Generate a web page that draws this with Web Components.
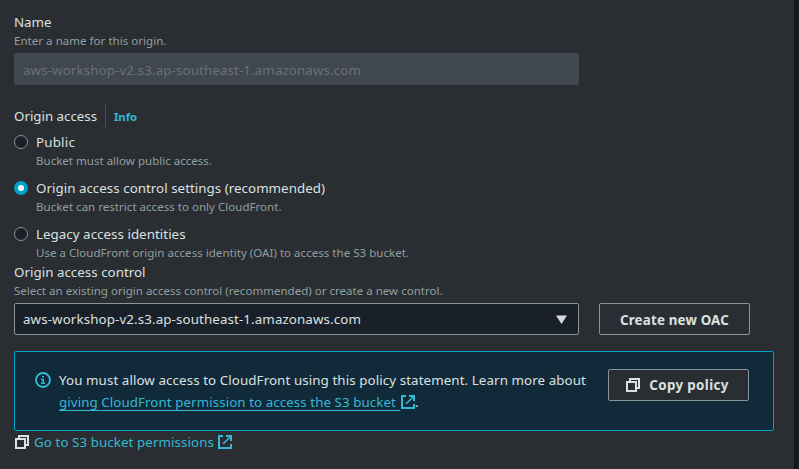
<!DOCTYPE html>
<html lang="en">
<head>
<meta charset="utf-8">
<title>Origin settings</title>
<style>
html,body{margin:0;background:#2a2e33;height:100%;overflow:hidden}
body{font-family:"Noto Sans",sans-serif;font-size:13.33px;line-height:22px;color:#dbe0e0}
</style>
</head>
<body>
<origin-page></origin-page>
<script>
const define = (name, html, setup) => customElements.define(name, class extends HTMLElement {
  constructor() {
    super();
    const t = document.createElement('template');
    t.innerHTML = html;
    this.attachShadow({mode: 'open'}).append(t.content.cloneNode(true));
  }
  connectedCallback() { if (setup) setup(this, this.shadowRoot); }
});

/* One line of text whose tracking is set so that it spans the width in "w". */
define('ui-text', `<style>:host{display:inline-block;white-space:pre;vertical-align:top}</style><slot></slot>`, el => {
  const w = +el.getAttribute('w');
  const n = el.textContent.length;
  const natural = el.getBoundingClientRect().width;
  el.style.letterSpacing = ((w - natural) / n).toFixed(4) + 'px';
});

define('icon-copy', `<style>:host{display:block;width:14px;height:14px}svg{display:block}</style>
<svg width="14" height="14" viewBox="0 0 14 14" fill="none" stroke="currentColor" stroke-width="2"><path d="M1 4h9v9H1zM4 4V1h9v9h-3"/></svg>`);

define('icon-external', `<style>:host{display:block;width:14px;height:14px;color:#33b9d4}svg{display:block}</style>
<svg width="14" height="14" viewBox="0 0 14 14" fill="none" stroke="currentColor" stroke-width="2"><path d="M5 1H1v12h12V9M8 1h5v5"/><path d="M12.5 1.5L5.2 8.8" stroke-width="1.6"/></svg>`);

define('icon-info', `<style>:host{display:block;width:16px;height:16px;color:#33b9d4}svg{display:block}</style>
<svg width="16" height="16" viewBox="0 0 16 16" fill="none" stroke="currentColor"><circle cx="8" cy="8" r="7" stroke-width="1.9"/><path d="M7 4.7h2M6 7.5h3M8.2 7v4M6 11.3h4" stroke-width="1.5"/></svg>`);

define('form-field', `<style>
:host{display:block}
.label{height:22px}
.desc{height:16px;line-height:16px;font-size:11.5px;color:#919f9f;margin-bottom:4px}
</style><div class="label"><slot name="label"></slot></div><div class="desc"><slot name="desc"></slot></div><slot></slot>`);

define('text-box', `<style>
:host{display:flex;align-items:center;box-sizing:border-box;width:565px;height:32px;padding:2px 9px 0;border-radius:2px;background:#414750;color:#687078}
</style><slot></slot>`);

define('select-box', `<style>
:host{display:flex;align-items:center;justify-content:space-between;box-sizing:border-box;width:565px;height:32px;padding:0 11px 0 8px;border:1px solid #879596;border-radius:2px;background:#1a2029}
svg{display:block}
</style><slot></slot><svg width="11" height="9" viewBox="0 0 11 9"><path d="M0 .5h11L5.5 9z" fill="#d5dbdb"/></svg>`);

define('radio-option', `<style>
:host{display:grid;grid-template-columns:14px 1fr;column-gap:8px;height:38px}
.dot{box-sizing:border-box;width:14px;height:14px;margin-top:4px;border:1px solid #879596;border-radius:50%;background:#1a2029}
:host([checked]) .dot{border:4px solid #00a1c9;background:#fff}
.desc{height:16px;line-height:16px;font-size:11.5px;color:#919f9f}
</style><div class="dot"></div><div><slot></slot></div><i></i><div class="desc"><slot name="desc"></slot></div>`);

define('ui-button', `<style>
:host{display:flex;align-items:center;justify-content:center;gap:9px;box-sizing:border-box;height:32px;border:1px solid #879596;border-radius:2px;background:#2a2e33;font-weight:700}
</style><slot></slot>`);

define('info-alert', `<style>
:host{display:flex;box-sizing:border-box;width:760px;height:80px;padding:17px 24px 0 20px;border:1px solid #00a1c9;border-radius:2px;background:#112a3a}
icon-info{margin:3px 8px 0 0}
.body{flex:1}
</style><icon-info></icon-info><div class="body"><slot></slot></div><slot name="action"></slot>`);

define('origin-page', `<style>
:host{display:grid;grid-template-columns:794px 5px;height:469px}
main{padding:11px 0 0 14px}
aside{background:#16191f;border-left:1px solid #101216}
.head{display:flex;height:22px;margin:20px 0 4px}
.info{margin-left:8px;padding-left:8px;border-left:1px solid #4a5056;color:#33b9d4;font-weight:700;font-size:11.3px;line-height:24px}
.radios{display:grid;row-gap:8px}
.row{display:flex;gap:20px;margin-bottom:16px}
.row ui-button{width:151px;padding-top:1px}
info-alert ui-button{width:141px;padding-right:2px}
.line{display:flex;height:22px}
.link{color:#33b9d4}
.under{height:19px;border-bottom:1px solid #33b9d4;padding-right:4px}
.line icon-external{margin:4px 0 0 1px}
.go icon-copy{margin:4px 5px 0 1px}
.go icon-external{margin-left:4px}
</style>
<main>
<form-field><ui-text slot="label" w="37.5">Name</ui-text><ui-text slot="desc" w="152.5">Enter a name for this origin.</ui-text>
<text-box><ui-text w="338">aws-workshop-v2.s3.ap-southeast-1.amazonaws.com</ui-text></text-box></form-field>
<div class="head"><ui-text w="83">Origin access</ui-text><div class="info"><ui-text w="23">Info</ui-text></div></div>
<div class="radios">
<radio-option><ui-text w="39">Public</ui-text><ui-text slot="desc" w="176">Bucket must allow public access.</ui-text></radio-option>
<radio-option checked><ui-text w="289">Origin access control settings (recommended)</ui-text><ui-text slot="desc" w="245.5">Bucket can restrict access to only CloudFront.</ui-text></radio-option>
<radio-option><ui-text w="149.6">Legacy access identities</ui-text><ui-text slot="desc" w="373">Use a CloudFront origin access identity (OAI) to access the S3 bucket.</ui-text></radio-option>
</div>
<form-field><ui-text slot="label" w="131.6">Origin access control</ui-text><ui-text slot="desc" w="428.6">Select an existing origin access control (recommended) or create a new control.</ui-text>
<div class="row"><select-box><ui-text w="338">aws-workshop-v2.s3.ap-southeast-1.amazonaws.com</ui-text></select-box><ui-button><ui-text w="109">Create new OAC</ui-text></ui-button></div></form-field>
<info-alert>
<div class="line"><ui-text w="527">You must allow access to CloudFront using this policy statement. Learn more about</ui-text></div>
<div class="line"><span class="link under"><ui-text w="337">giving CloudFront permission to access the S3 bucket</ui-text></span><icon-external></icon-external><span>.</span></div>
<ui-button slot="action"><icon-copy></icon-copy><ui-text w="79.5">Copy policy</ui-text></ui-button>
</info-alert>
<div class="line go"><icon-copy></icon-copy><ui-text class="link" w="180">Go to S3 bucket permissions</ui-text><icon-external></icon-external></div>
</main><aside></aside>`);
</script>
</body>
</html>
